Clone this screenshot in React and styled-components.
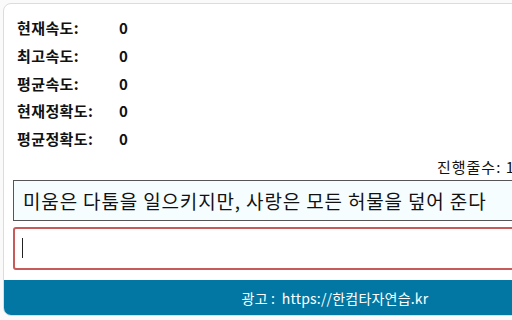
import styled, { createGlobalStyle } from "styled-components";
import { useEffect, useRef } from "react";

const GlobalStyle = createGlobalStyle`
  html, body {
    margin: 0;
    padding: 0;
    background-color: #fafafa;
    overflow: hidden;
  }
  body {
    font-family: "Noto Sans CJK KR", "Noto Sans", sans-serif;
    color: #111;
  }
`;

const StyledCard = styled.div`
  margin: 3px 0 0 3px;
  width: 666px;
  background-color: #ffffff;
  border: 1px solid #dcdcdc;
  border-radius: 8px;
  overflow: hidden;
`;

const StyledBody = styled.div`
  width: 502px;
  padding: 10px 0 10px 9px;
`;

const StyledStats = styled.div`
  display: flex;
  flex-direction: column;
  padding-left: 4px;
`;

const StyledStatRow = styled.div`
  display: flex;
  align-items: center;
  height: 27.7px;
  font-size: 15px;
  font-weight: 700;
  letter-spacing: 0.4px;
`;

const StyledLabel = styled.span`
  width: 102px;
`;

const StyledProgress = styled.div`
  margin-top: 5px;
  height: 20px;
  line-height: 20px;
  font-size: 15px;
  letter-spacing: 1px;
  text-align: right;
  white-space: nowrap;
`;

const StyledSentence = styled.div`
  margin-top: 3px;
  height: 39px;
  display: flex;
  align-items: center;
  padding-left: 9px;
  border: 1px solid #555;
  background-color: #f6fdff;
  font-size: 19px;
  letter-spacing: 0.85px;
  white-space: nowrap;
`;

const StyledInputWrap = styled.div`
  position: relative;
  margin-top: 6px;
`;

const StyledInput = styled.input`
  display: block;
  box-sizing: border-box;
  width: 100%;
  height: 43px;
  padding: 0 8px;
  border: 2px solid #c85a5a;
  border-radius: 3px;
  outline: none;
  font-family: inherit;
  font-size: 19px;
  background-color: #fff;
  caret-color: transparent;
`;

const StyledCaret = styled.span`
  position: absolute;
  left: 9px;
  top: 11px;
  width: 1px;
  height: 20px;
  background-color: #222;
  pointer-events: none;
`;

const StyledFooter = styled.div`
  height: 35px;
  display: flex;
  align-items: center;
  justify-content: center;
  padding-right: 4px;
  background-color: #0277a3;
  color: #ffffff;
  font-size: 14px;
  letter-spacing: 0.2px;
`;

const stats = [
  ["현재속도:", 0],
  ["최고속도:", 0],
  ["평균속도:", 0],
  ["현재정확도:", 0],
  ["평균정확도:", 0],
];

function App() {
  const inputRef = useRef(null);

  useEffect(() => {
    inputRef.current?.focus({ preventScroll: true });
  }, []);

  return (
    <>
      <GlobalStyle />
      <StyledCard>
        <StyledBody>
          <StyledStats>
            {stats.map(([label, value]) => (
              <StyledStatRow key={label}>
                <StyledLabel>{label}</StyledLabel>
                <span>{value}</span>
              </StyledStatRow>
            ))}
          </StyledStats>
          <StyledProgress>진행줄수: 1</StyledProgress>
          <StyledSentence>
            미움은 다툼을 일으키지만, 사랑은 모든 허물을 덮어 준다
          </StyledSentence>
          <StyledInputWrap>
            <StyledInput ref={inputRef} />
            <StyledCaret />
          </StyledInputWrap>
        </StyledBody>
        <StyledFooter>광고 :&nbsp;&nbsp;https://한컴타자연습.kr</StyledFooter>
      </StyledCard>
    </>
  );
}

export default App;
